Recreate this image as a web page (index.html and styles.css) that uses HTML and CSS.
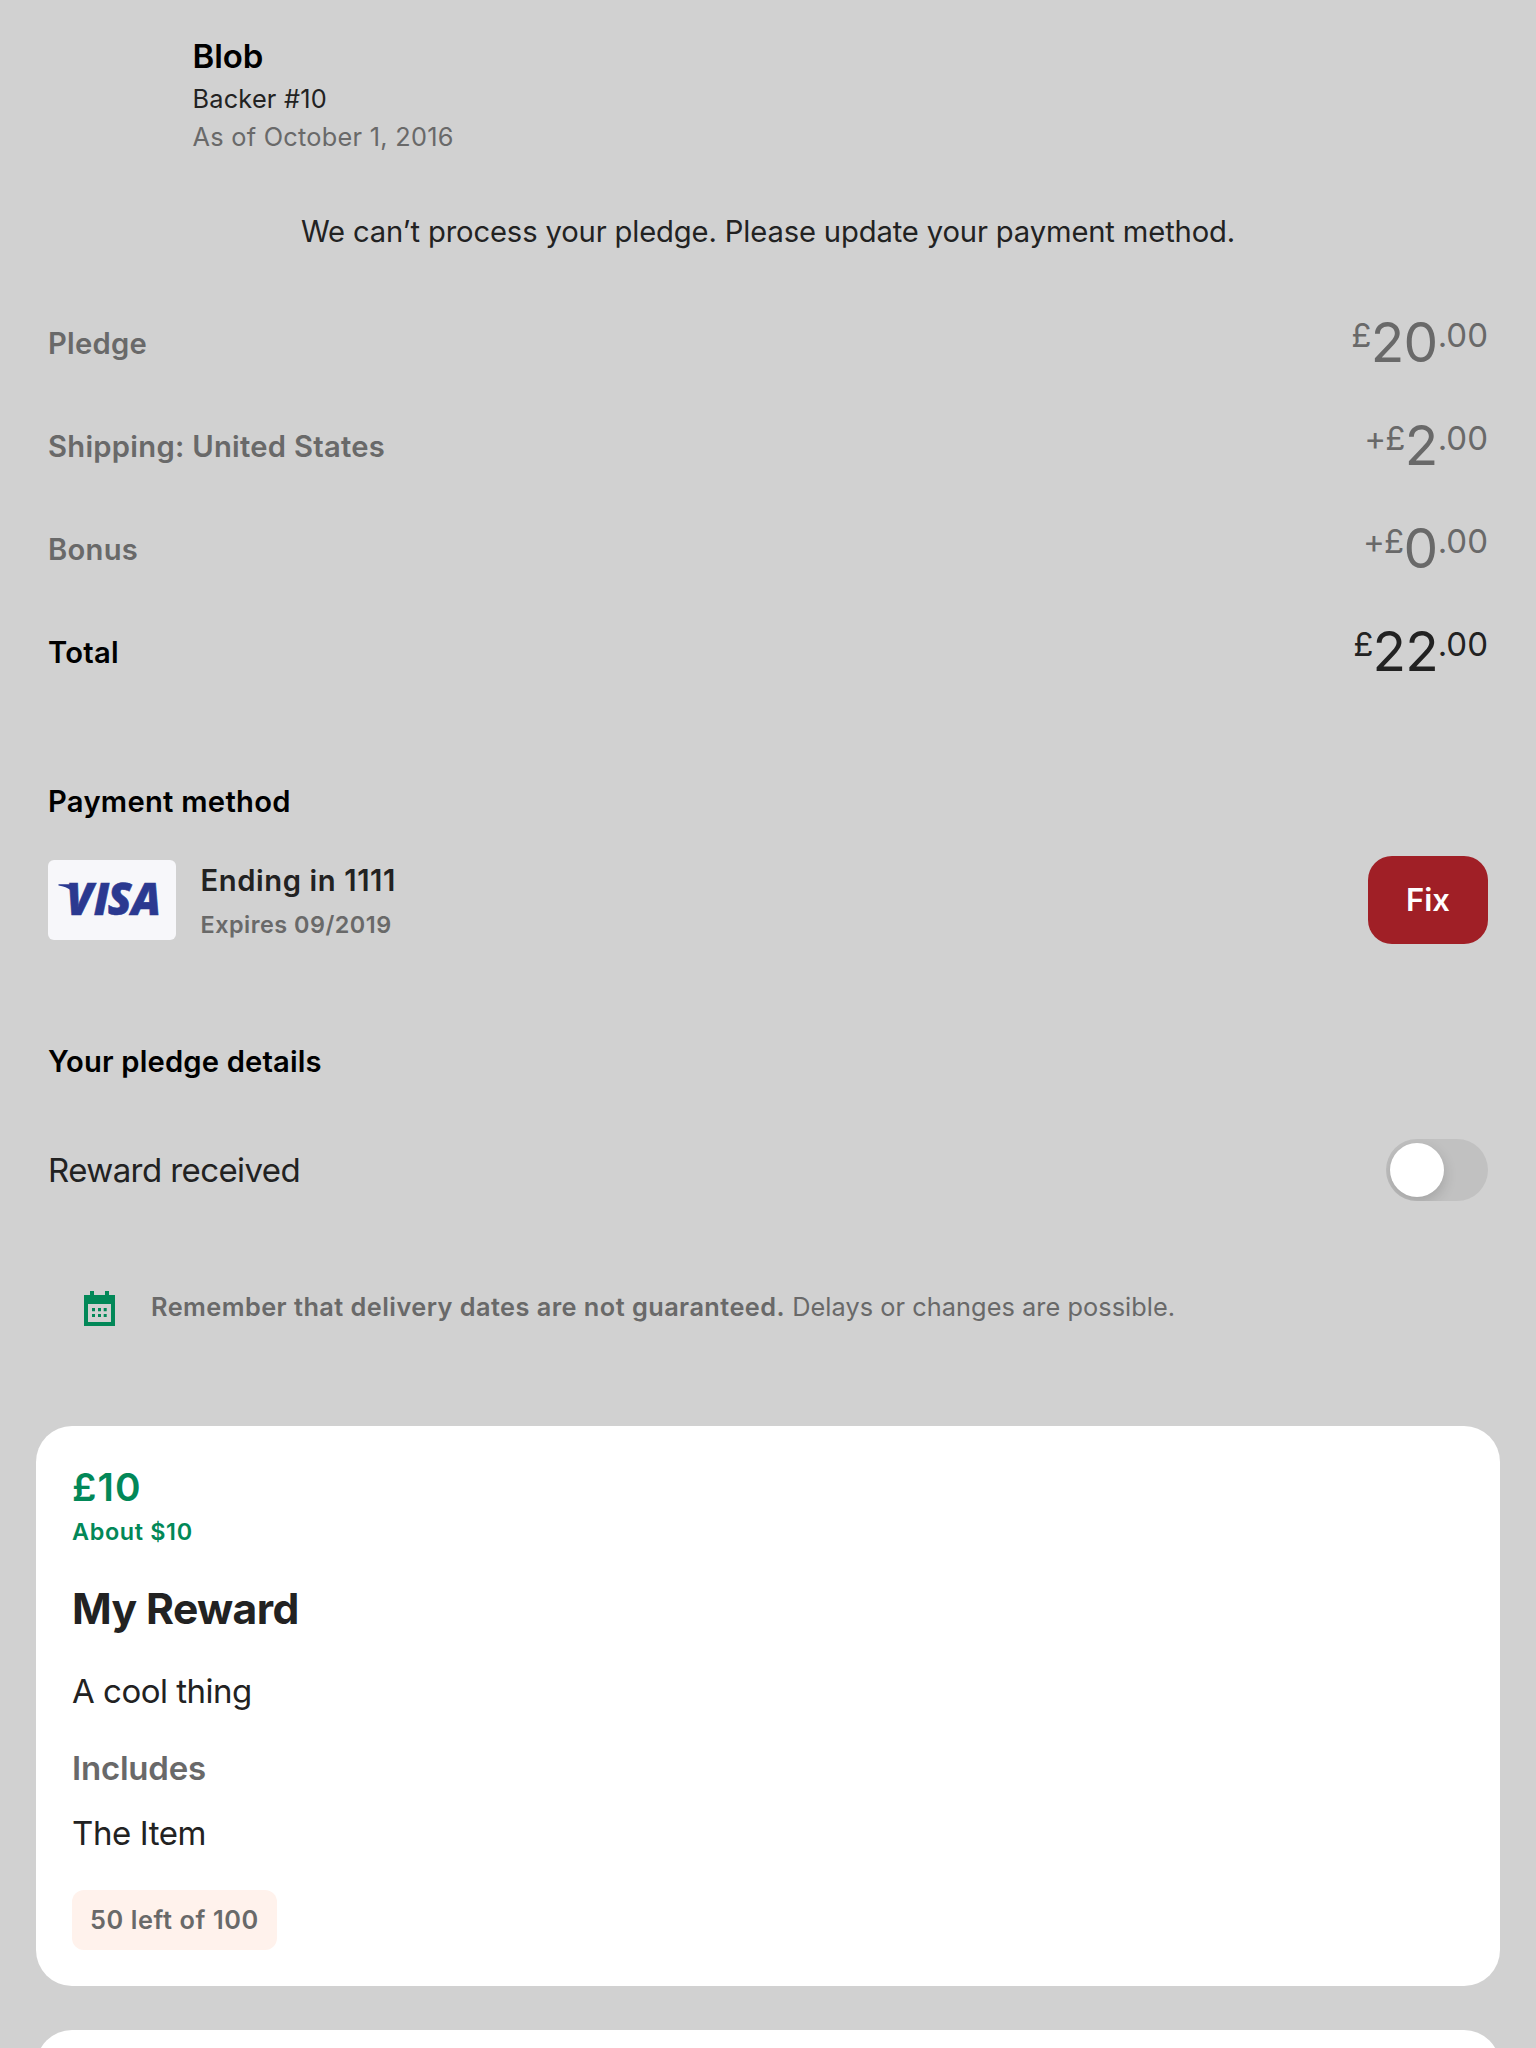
FILE: index.html
```html
<!DOCTYPE html>
<html lang="en">
<head>
  <meta charset="utf-8">
  <title>Manage your pledge</title>
  <link rel="stylesheet" href="styles.css">
</head>
<body>
  <main class="page">
    <header class="backer">
      <h1 class="backer-name">Blob</h1>
      <p class="backer-number">Backer #10</p>
      <p class="backer-date">As of October 1, 2016</p>
    </header>

    <p class="message">We can’t process your pledge. Please update your payment method.</p>

    <section class="summary">
      <div class="summary-row">
        <span class="label">Pledge</span>
        <span class="amount"><span class="small">£</span>20<span class="small">.00</span></span>
      </div>
      <div class="summary-row">
        <span class="label">Shipping: United States</span>
        <span class="amount"><span class="small">+£</span>2<span class="small">.00</span></span>
      </div>
      <div class="summary-row">
        <span class="label">Bonus</span>
        <span class="amount"><span class="small">+£</span>0<span class="small">.00</span></span>
      </div>
      <div class="summary-row total">
        <span class="label">Total</span>
        <span class="amount"><span class="small">£</span>22<span class="small">.00</span></span>
      </div>
    </section>

    <section class="payment">
      <h2 class="heading">Payment method</h2>
      <div class="payment-row">
        <svg class="card-logo" viewBox="0 0 128 80" role="img" aria-label="Visa">
          <rect width="128" height="80" rx="6" fill="#f7f7fa"/>
          <path d="M10.500 24.300H24Q27.500 24.300 28 28L30 40Q26 28 10.500 25.500Z" fill="#2b3990"/>
          <text class="visa" y="55.200" x="18.300 45.800 59.800 83.500">VISA</text>
        </svg>
        <div class="card-info">
          <p class="card-number">Ending in 1111</p>
          <p class="card-expiry">Expires 09/2019</p>
        </div>
        <button class="fix" type="button">Fix</button>
      </div>
    </section>

    <section class="details">
      <h2 class="heading details-heading">Your pledge details</h2>
      <div class="received">
        <span class="received-label">Reward received</span>
        <span class="toggle"><span class="knob"></span></span>
      </div>
      <div class="reminder">
        <svg class="calendar" viewBox="0 0 31 35" fill="#028858">
          <path fill-rule="evenodd" d="M6 0h4v4h11V0h4v4h6v31H0V4h6zM4 13v18h23V13z"/>
          <path d="M8 17h3v3.300H8zM14 17h3v3.300h-3zM19.700 17h3v3.300h-3zM8 23h3v3H8zM14 23h3v3h-3zM19.700 23h3v3h-3z"/>
        </svg>
        <p class="reminder-text"><strong>Remember that delivery dates are not guaranteed.</strong> Delays or changes are possible.</p>
      </div>
    </section>

    <section class="rewards">
      <article class="reward">
        <p class="price">£10</p>
        <p class="converted">About $10</p>
        <h3 class="reward-title">My Reward</h3>
        <p class="reward-text">A cool thing</p>
        <h4 class="includes">Includes</h4>
        <p class="reward-text item">The Item</p>
        <span class="badge">50 left of 100</span>
      </article>
      <article class="reward"></article>
    </section>
  </main>
</body>
</html>
```
FILE: styles.css
```css
* {
  box-sizing: border-box;
}

body,
h1,
h2,
h3,
h4,
p {
  margin: 0;
}

body {
  background: #d1d1d1;
  color: #222;
  font-family: Inter, "Liberation Sans", sans-serif;
}

.page {
  height: 2048px;
  padding: 36px 36px 0;
  overflow: hidden;
}

.backer {
  padding-left: 156.5px;
}

.backer-name {
  margin-bottom: 4px;
  color: #000;
  font-size: 33px;
  font-weight: 600;
  line-height: 40px;
  letter-spacing: -0.1px;
}

.backer-number,
.backer-date {
  font-size: 25.3px;
  line-height: 38px;
  letter-spacing: 0.22px;
}

.backer-date {
  color: #696969;
  letter-spacing: 0.27px;
}

.message {
  margin-top: 58px;
  font-size: 29.2px;
  line-height: 36px;
  letter-spacing: -0.14px;
  text-align: center;
}

.summary {
  margin-top: 42px;
  padding: 0 12px;
}

.summary-row {
  display: flex;
  align-items: center;
  justify-content: space-between;
  height: 103px;
  color: #696969;
}

.label,
.heading {
  font-size: 29.2px;
  font-weight: 600;
  line-height: 36px;
  letter-spacing: 0.28px;
}

.amount {
  margin-bottom: 3px;
  font-size: 55px;
  line-height: 60px;
  letter-spacing: -0.6px;
}

.small {
  font-size: 33px;
  line-height: 0;
  letter-spacing: 0;
  vertical-align: 15.5px;
}

.small:first-child {
  letter-spacing: -0.7px;
}

.total {
  color: #222;
}

.total .amount {
  letter-spacing: -1px;
}

.total .label,
.heading {
  color: #000;
}

.payment {
  margin-top: 80px;
  padding: 0 12px;
}

.payment-row {
  display: flex;
  align-items: center;
  margin-top: 36px;
}

.card-logo {
  width: 128px;
  height: 80px;
}

.visa {
  fill: #2b3990;
  stroke: #2b3990;
  stroke-width: 0.6px;
  font: italic 800 43.5px "Open Sans", sans-serif;
}

.card-info {
  flex: 1;
  padding: 2px 0 0 24.5px;
}

.card-number {
  font-size: 29.2px;
  font-weight: 600;
  line-height: 36px;
  letter-spacing: 0.6px;
}

.card-expiry {
  margin-top: 11px;
  color: #696969;
  font-size: 23.4px;
  font-weight: 600;
  line-height: 30px;
  letter-spacing: 0.5px;
}

.fix {
  width: 120px;
  height: 88px;
  padding: 0;
  border: 0;
  border-radius: 24px;
  background: #a01f26;
  color: #fff;
  font: 600 31px/38px Inter, "Liberation Sans", sans-serif;
}

.details {
  margin-top: 100px;
  padding: 0 12px;
}

.details-heading {
  letter-spacing: 0.16px;
}

.received {
  display: flex;
  align-items: center;
  justify-content: space-between;
  margin-top: 59px;
}

.received-label {
  font-size: 33px;
  line-height: 40px;
  letter-spacing: -0.58px;
}

.toggle {
  width: 102px;
  height: 62px;
  padding: 4px;
  overflow: hidden;
  border-radius: 31px;
  background: #c1c1c1;
}

.knob {
  display: block;
  width: 54px;
  height: 54px;
  border-radius: 50%;
  background: #fff;
  box-shadow: 0 5px 14px rgba(0, 0, 0, 0.16);
}

.reminder {
  display: flex;
  margin-top: 88px;
  padding-left: 36px;
}

.calendar {
  width: 31px;
  height: 35px;
  margin-top: 2px;
}

.reminder-text {
  margin-left: 36px;
  color: #696969;
  font-size: 25.3px;
  line-height: 36px;
  letter-spacing: 0.06px;
}

.reminder-text strong {
  font-weight: 600;
  letter-spacing: 0.46px;
}

.rewards {
  display: flex;
  flex-direction: column;
  gap: 44px;
  margin-top: 100px;
}

.reward {
  height: 560px;
  flex: none;
  padding: 38px 36px 36px;
  border-radius: 36px;
  background: #fff;
}

.price {
  color: #028858;
  font-size: 38.8px;
  font-weight: 600;
  line-height: 46px;
  letter-spacing: 1.1px;
}

.converted {
  margin-top: 7px;
  color: #028858;
  font-size: 23.4px;
  font-weight: 600;
  line-height: 30px;
  letter-spacing: 0.65px;
}

.reward-title {
  margin-top: 36px;
  font-size: 42.6px;
  font-weight: 700;
  line-height: 52px;
  letter-spacing: -0.6px;
}

.reward-text {
  margin-top: 36px;
  font-size: 33px;
  line-height: 40px;
  letter-spacing: -0.5px;
}

.includes {
  margin-top: 37px;
  color: #696969;
  font-size: 33px;
  font-weight: 600;
  line-height: 40px;
  letter-spacing: -0.22px;
}

.item {
  margin-top: 25px;
  letter-spacing: -0.4px;
}

.badge {
  display: flex;
  align-items: center;
  width: fit-content;
  height: 60px;
  margin-top: 37px;
  padding: 0 18px 1px;
  border-radius: 12px;
  background: #fff2ec;
  color: #696969;
  font-size: 25.3px;
  font-weight: 600;
  letter-spacing: 0.6px;
}
```
